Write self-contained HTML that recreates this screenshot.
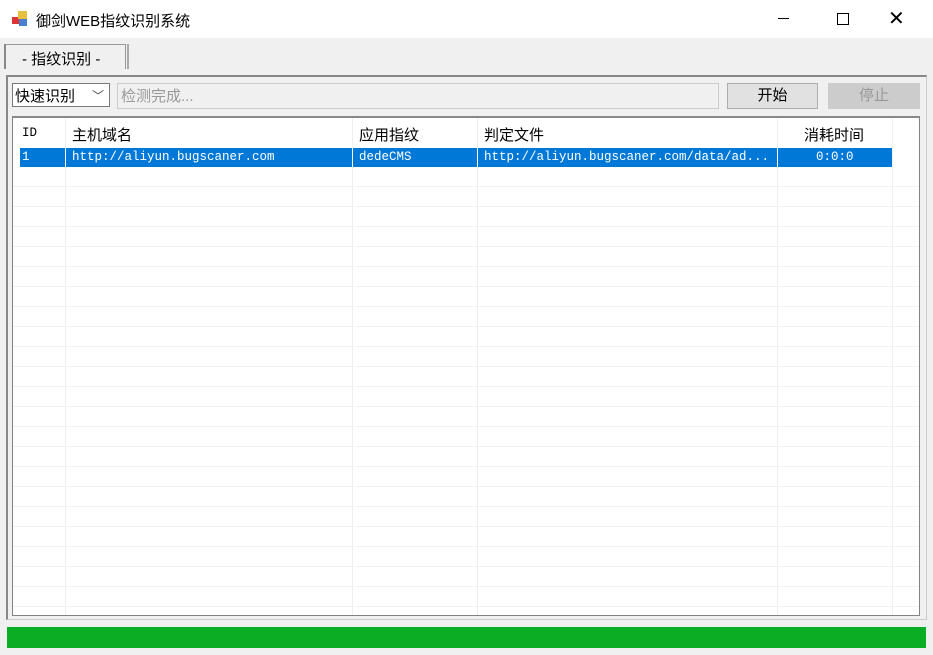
<!DOCTYPE html><html><head><style>
body{margin:0;width:933px;height:655px;background:#f0f0f0;font-family:"Liberation Sans","Noto Sans CJK SC",sans-serif;position:relative;overflow:hidden;font-size:14px}
.a{position:absolute}
.mono{font-family:"Liberation Mono","Noto Serif CJK SC",monospace;font-size:12.5px;letter-spacing:0}
</style></head><body>
<div class="a" style="left:0;top:0;width:933px;height:38px;background:#fff"></div>
<div class="a" style="left:12px;top:11px;width:16px;height:16px">
<div class="a" style="left:0;top:6px;width:7px;height:7px;background:#d33"></div>
<div class="a" style="left:6px;top:0;width:9px;height:8px;background:#e8c040"></div>
<div class="a" style="left:7px;top:8px;width:8px;height:7px;background:#4a7fd0"></div></div>
<div class="a" style="left:36px;top:10px;font-size:15px">御剑WEB指纹识别系统</div>
<div class="a" style="left:778px;top:18px;width:11px;height:1px;background:#000"></div>
<div class="a" style="left:837px;top:13px;width:10px;height:10px;border:1px solid #000"></div>
<div class="a" style="left:888px;top:6px;font-size:20px;font-weight:300">✕</div>
<div class="a" style="left:4px;top:44px;width:119px;height:24px;border:1px solid #999;border-bottom:none;border-left:2px solid #888;background:#f0f0f0"></div>
<div class="a" style="left:127px;top:44px;width:2px;height:25px;background:#aaa"></div>
<div class="a" style="left:22px;top:48px;font-size:15px">- 指纹识别 -</div>
<div class="a" style="left:6px;top:75px;width:918px;height:542px;border-top:2px solid #888;border-left:2px solid #888;border-right:1px solid #ccc;border-bottom:1px solid #ccc"></div>
<div class="a" style="left:12px;top:83px;width:96px;height:22px;border:1px solid #7a7a7a;background:#fff"></div>
<div class="a" style="left:15px;top:85px;font-size:15px">快速识别</div>
<div class="a" style="left:92px;top:87px;font-size:12px;color:#444">﹀</div>
<div class="a" style="left:117px;top:83px;width:600px;height:24px;border:1px solid #ccc;background:#f0f0f0"></div>
<div class="a" style="left:121px;top:85px;font-size:15px;color:#999">检测完成...</div>
<div class="a" style="left:727px;top:83px;width:89px;height:24px;border:1px solid #adadad;background:#e1e1e1;text-align:center;line-height:24px;font-size:15px">开始</div>
<div class="a" style="left:828px;top:83px;width:90px;height:24px;border:1px solid #ccc;background:#ccc;text-align:center;line-height:24px;font-size:15px;color:#999">停止</div>
<div class="a" style="left:12px;top:116px;width:906px;height:497px;border:1px solid #828282;border-top:2px solid #888;background:#fff;overflow:hidden">
<svg class="a" style="left:0;top:0" width="906" height="497">
<g stroke="#eee" stroke-width="1">
<line x1="52.5" y1="0" x2="52.5" y2="497"/><line x1="339.5" y1="0" x2="339.5" y2="497"/><line x1="464.5" y1="0" x2="464.5" y2="497"/><line x1="764.5" y1="0" x2="764.5" y2="497"/><line x1="879.5" y1="0" x2="879.5" y2="497"/>
</g>
<g stroke="#f2f2f2">
<line x1="0" x2="906" y1="68.5" y2="68.5"/><line x1="0" x2="906" y1="88.5" y2="88.5"/><line x1="0" x2="906" y1="108.5" y2="108.5"/><line x1="0" x2="906" y1="128.5" y2="128.5"/><line x1="0" x2="906" y1="148.5" y2="148.5"/><line x1="0" x2="906" y1="168.5" y2="168.5"/><line x1="0" x2="906" y1="188.5" y2="188.5"/><line x1="0" x2="906" y1="208.5" y2="208.5"/><line x1="0" x2="906" y1="228.5" y2="228.5"/><line x1="0" x2="906" y1="248.5" y2="248.5"/><line x1="0" x2="906" y1="268.5" y2="268.5"/><line x1="0" x2="906" y1="288.5" y2="288.5"/><line x1="0" x2="906" y1="308.5" y2="308.5"/><line x1="0" x2="906" y1="328.5" y2="328.5"/><line x1="0" x2="906" y1="348.5" y2="348.5"/><line x1="0" x2="906" y1="368.5" y2="368.5"/><line x1="0" x2="906" y1="388.5" y2="388.5"/><line x1="0" x2="906" y1="408.5" y2="408.5"/><line x1="0" x2="906" y1="428.5" y2="428.5"/><line x1="0" x2="906" y1="448.5" y2="448.5"/><line x1="0" x2="906" y1="468.5" y2="468.5"/><line x1="0" x2="906" y1="488.5" y2="488.5"/>
</g></svg>
<div class="a" style="left:7px;top:30px;width:872px;height:19px;background:#0078d7"></div>
<div class="a" style="left:52px;top:30px;width:1px;height:19px;background:#fff"></div>
<div class="a" style="left:339px;top:30px;width:1px;height:19px;background:#fff"></div>
<div class="a" style="left:464px;top:30px;width:1px;height:19px;background:#fff"></div>
<div class="a" style="left:764px;top:30px;width:1px;height:19px;background:#fff"></div>
<div class="a mono" style="left:9px;top:8px">ID</div>
<div class="a" style="left:59px;top:6px;font-size:15px">主机域名</div>
<div class="a" style="left:346px;top:6px;font-size:15px">应用指纹</div>
<div class="a" style="left:471px;top:6px;font-size:15px">判定文件</div>
<div class="a" style="left:791px;top:6px;font-size:15px">消耗时间</div>
<div class="a mono" style="left:9px;top:32px;color:#fff">1</div>
<div class="a mono" style="left:59px;top:32px;color:#fff">http://aliyun.bugscaner.com</div>
<div class="a mono" style="left:346px;top:32px;color:#fff">dedeCMS</div>
<div class="a mono" style="left:471px;top:32px;color:#fff">http://aliyun.bugscaner.com/data/ad...</div>
<div class="a mono" style="left:803px;top:32px;color:#fff">0:0:0</div>
</div>
<div class="a" style="left:7px;top:627px;width:919px;height:21px;background:#0aad24"></div>
</body></html>
